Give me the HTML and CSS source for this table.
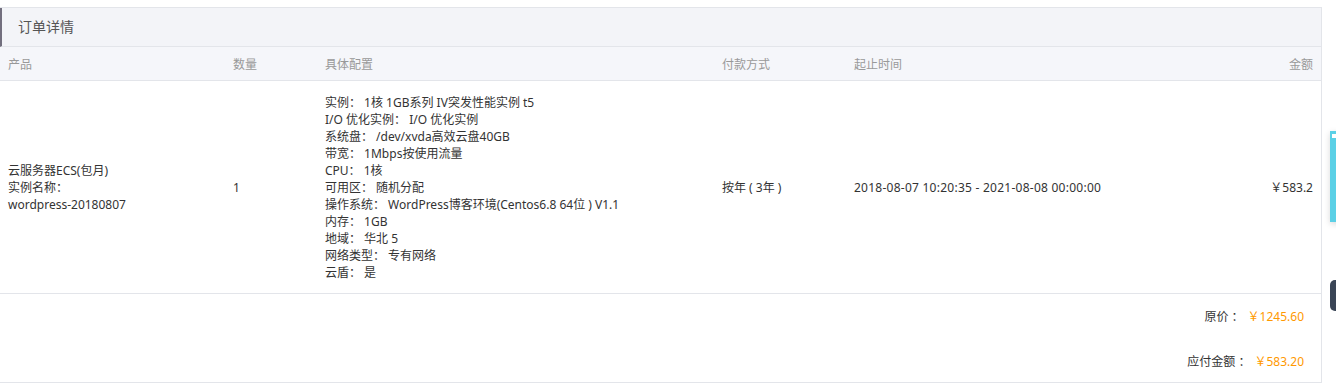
FILE: index.html
```html
<!DOCTYPE html>
<html lang="zh-CN">
<head>
<meta charset="utf-8">
<title>订单详情</title>
<link rel="stylesheet" href="styles.css">
</head>
<body>
<div class="panel">
  <div class="panel-title">订单详情</div>
  <table class="order">
    <thead>
      <tr>
        <th class="c-prod">产品</th>
        <th class="c-qty">数量</th>
        <th class="c-conf">具体配置</th>
        <th class="c-pay">付款方式</th>
        <th class="c-time">起止时间</th>
        <th class="c-amt">金额</th>
      </tr>
    </thead>
    <tbody>
      <tr>
        <td class="c-prod">云服务器ECS(包月)<br>实例名称：<br>wordpress-20180807</td>
        <td class="c-qty">1</td>
        <td class="c-conf">
          <div>实例： 1核 1GB系列 IV突发性能实例 t5</div>
          <div>I/O 优化实例： I/O 优化实例</div>
          <div>系统盘： /dev/xvda高效云盘40GB</div>
          <div>带宽： 1Mbps按使用流量</div>
          <div>CPU： 1核</div>
          <div>可用区： 随机分配</div>
          <div>操作系统： WordPress博客环境(Centos6.8 64位 ) V1.1</div>
          <div>内存： 1GB</div>
          <div>地域： 华北 5</div>
          <div>网络类型： 专有网络</div>
          <div>云盾： 是</div>
        </td>
        <td class="c-pay">按年 ( 3年 )</td>
        <td class="c-time latin">2018-08-07 10:20:35 - 2021-08-08 00:00:00</td>
        <td class="c-amt">￥583.2</td>
      </tr>
    </tbody>
  </table>
  <div class="summary">
    <div class="sum-line">原价 ：<span class="price">￥1245.60</span></div>
    <div class="sum-line second">应付金额 ：<span class="price">￥583.20</span></div>
  </div>
</div>
<div class="float-cyan"><span class="dot"></span></div>
<div class="float-dark"></div>
</body>
</html>
```

FILE: styles.css
```css
html, body {
  margin: 0;
  padding: 0;
  background: #fff;
}
body {
  padding-top: 7px;
  font-family: "Noto Sans", "Noto Sans CJK SC", sans-serif;
  font-size: 12px;
  color: #333;
  overflow: hidden;
}
.panel {
  width: 1321px;
  border-top: 1px solid #e3e5ea;
  border-right: 1px solid #e3e5ea;
  border-bottom: 1px solid #e3e5ea;
}
.panel-title {
  height: 38px;
  line-height: 38px;
  background: #f3f4f8;
  border-left: 2px solid #726f7e;
  padding-left: 16px;
  font-size: 14px;
  color: #555;
  border-bottom: 1px solid #e3e5ea;
}
.order {
  width: 100%;
  border-collapse: collapse;
  table-layout: fixed;
}
.order th {
  height: 33px;
  background: #f5f6fa;
  color: #999;
  font-weight: normal;
  text-align: left;
  padding: 0 8px;
  border-bottom: 1px solid #e3e5ea;
}
.order td {
  vertical-align: middle;
  padding: 13px 8px 12px;
  line-height: 17px;
  border-bottom: 1px solid #e3e5ea;
}
.order td.latin {
  letter-spacing: 0.25px;
}
.c-prod { width: 209px; }
.c-qty { width: 76px; }
.c-conf { width: 381px; }
.c-pay { width: 116px; }
.c-time { width: auto; }
.c-amt { width: 140px; }
.order th.c-amt, .order td.c-amt { text-align: right; }
.summary {
  padding: 14px 17px 12px 0;
  text-align: right;
  line-height: 17px;
}
.sum-line.second {
  margin-top: 28px;
}
.price {
  color: #ff9900;
  margin-left: 4px;
}
.float-cyan {
  position: fixed;
  left: 1330px;
  top: 131px;
  width: 20px;
  height: 91px;
  background: #5bd0e6;
  box-shadow: 0 2px 6px rgba(0,0,0,0.15);
}
.float-cyan .dot {
  position: absolute;
  left: 2px;
  top: 3px;
  width: 4px;
  height: 4px;
  background: #fff;
}
.float-dark {
  position: fixed;
  left: 1330px;
  top: 280px;
  width: 20px;
  height: 31px;
  border-radius: 5px;
  background: #3a4556;
}
```
